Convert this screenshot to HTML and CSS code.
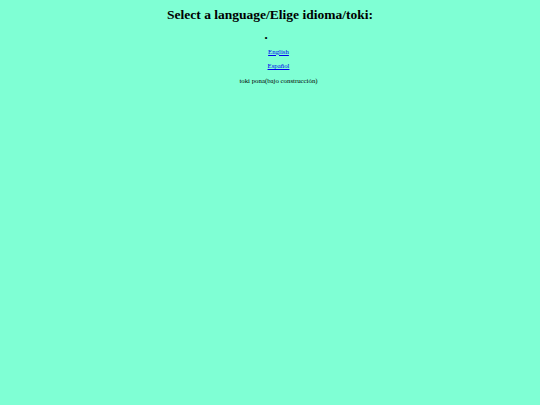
FILE: index.html
```html
<!DOCTYPE html>
<html>
<head>
<meta charset="utf-8">
<link rel="stylesheet" href="styles.css">
</head>
<body>
<h1 class="title">Select a language/Elige idioma/toki:</h1>
<div class="dot">•</div>
<ul class="langs">
<li class="lang"><a href="#">English</a></li>
<li class="lang"><a href="#">Español</a></li>
<li class="lang">toki pona(bajo construcción)</li>
</ul>
</body>
</html>
```
FILE: styles.css
```css
html, body {
  background: #7fffd4;
}
body {
  margin: 0;
  padding: 3.4px;
  font-family: "Liberation Serif", "Times New Roman", serif;
  font-size: 6.8px;
  line-height: 8px;
  color: #000;
  text-align: center;
}
.title {
  font-size: 13.5px;
  line-height: 16px;
  font-weight: bold;
  margin: 4px 0 9px;
}
.dot {
  font-size: 9px;
  padding-right: 8px;
  margin-top: 11px;
  margin-bottom: -1px;
}
.langs {
  margin: 0;
  padding: 0 0 0 17px;
  list-style: none;
}
.lang {
  margin: 6.5px 0;
}
.lang a {
  color: #0000ee;
}
```
